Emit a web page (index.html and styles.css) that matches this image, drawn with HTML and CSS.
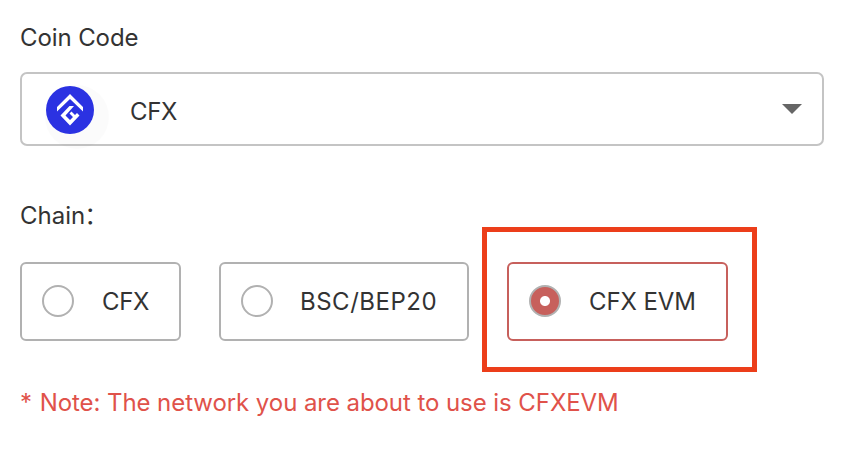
FILE: index.html
```html
<!DOCTYPE html>
<html lang="en">
<head>
<meta charset="utf-8">
<title>Coin and chain</title>
<link rel="stylesheet" href="styles.css">
</head>
<body>
<main class="form">
  <div class="label coin-label"><span class="t t-coin">Coin Code</span></div>
  <div class="select">
    <svg class="coin" width="66" height="66" viewBox="0 0 66 66">
      <circle cx="32" cy="32" r="32" fill="#000" fill-opacity=".015"/>
      <circle cx="25" cy="25" r="24" fill="#2b32e2"/>
      <g fill="#fff"><path d="M25 9 38 22V26.500L25 14 12 26.500V22Z"/><path d="M24.500 21H29L20.500 30.500 25 35 28 32 24.500 28.500 26.500 26.500 30 30 32 28 34.500 30.500 25 40.500 15.500 30.500Z"/></g>
    </svg>
    <span class="t t-sel">CFX</span>
    <svg class="arrow" width="20" height="10" viewBox="0 0 20 10"><path d="M0 0H20L10 10Z" fill="#666"/></svg>
  </div>
  <div class="label chain-label"><span class="t t-chain">Chain<span class="colon">：</span></span></div>
  <div class="options">
    <div class="option a"><i class="radio"></i><span class="t t-a">CFX</span></div>
    <div class="option b"><i class="radio"></i><span class="t t-b">BSC/BEP20</span></div>
    <div class="option c selected"><i class="radio"></i><span class="t t-c">CFX EVM</span><b class="highlight"></b></div>
  </div>
  <p class="note"><span class="t t-note"><span class="star">*</span> Note: The network you are about to use is CFXEVM</span></p>
</main>
</body>
</html>
```

FILE: styles.css
```css
* { box-sizing: border-box; }
body { margin: 0; background: #fff; color: #333; font: 24px/34px Inter, "Noto Sans CJK SC", sans-serif; }
.form { width: 860px; height: 450px; padding: 20px 36px 0 20px; overflow: hidden; }
.t { white-space: nowrap; display: inline-block; }
.label { height: 34px; }
.coin-label { padding-top: 1px; }
.t-coin { letter-spacing: -.1px; }
.t-sel, .t-a { letter-spacing: -.4px; }
.t-c { letter-spacing: -.1px; }
.t-b { letter-spacing: .5px; }
.t-note { letter-spacing: -.07px; }
.star { margin-right: 1px; }
.colon { font-family: "Noto Sans CJK SC", sans-serif; margin-left: -1px; }
.select { display: flex; align-items: center; height: 74px; margin-top: 18px; border: 2px solid #c4c4c4; border-radius: 7px; padding: 2px 20px 0 23px; }
.coin { width: 66px; height: 66px; margin-right: 19px; margin-top: 14px; margin-bottom: -2px; }
.t-sel { padding-top: 4px; }
.arrow { margin-left: auto; margin-bottom: 2px; }
.chain-label { margin-top: 52px; line-height: 32px; }
.options { display: flex; margin-top: 30px; }
.option { position: relative; display: flex; align-items: center; height: 79px; border: 2px solid #b1b1b1; border-radius: 6px; padding: 0 0 1px 20px; }
.option .t { padding-top: 2px; }
.a { width: 161px; }
.b { width: 250px; margin-left: 38px; }
.c { width: 221px; margin-left: 38px; }
.radio { width: 32px; height: 32px; margin-right: 28px; border: 2px solid #b1b1b1; border-radius: 50%; }
.b .radio { margin-right: 27px; }
.selected { border-color: #c7605c; }
.selected .radio { background: radial-gradient(circle, #fff 4.5px, #c7605c 5.5px); }
.highlight { position: absolute; left: -27px; top: -37px; width: 275px; height: 145px; border: 5px solid #ec3e1a; }
.note { margin: 45px 0 0; color: #e0524a; }
```
